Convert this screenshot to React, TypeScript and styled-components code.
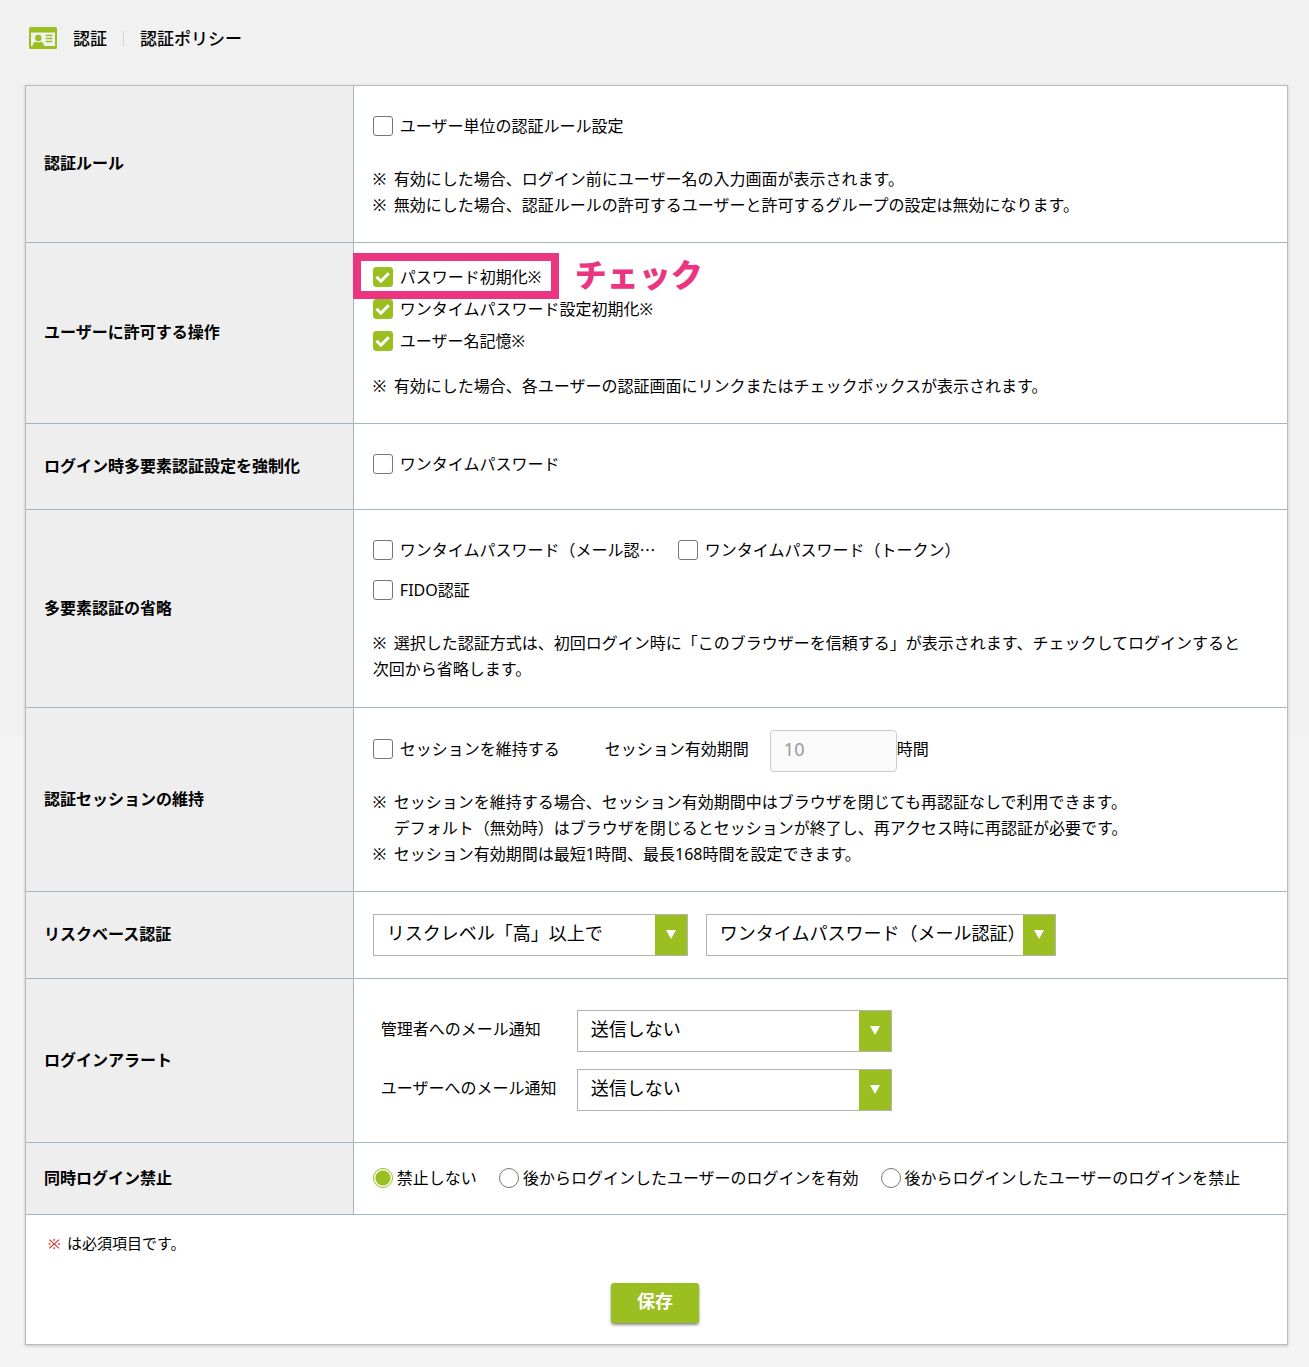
import React, { useId, useState } from "react";
import styled, { createGlobalStyle } from "styled-components";

const GREEN = "#9bbe20";
const PINK = "#eb3581";
const LINE = "#a5b5c0";

const GlobalStyle = createGlobalStyle`
  *, *::before, *::after { box-sizing: border-box; }
  body {
    margin: 0;
    background: linear-gradient(#f1f1f1 736px, #f4f4f4 736px) #f4f4f4;
    color: #000;
    font-family: "Noto Sans", "Noto Sans CJK JP", sans-serif;
    font-size: 16px;
    line-height: 26px;
  }
  button, input, select { font: inherit; }
`;

const Page = styled.main`
  padding: 0 21px 22px 25px;
`;

const Header = styled.header`
  display: flex;
  align-items: center;
  padding: 26px 4px 34px;
  font-size: 17px;
  line-height: 25px;
  font-weight: 500;
`;

const CardIcon = styled.svg`
  display: block;
  width: 28px;
  height: 22px;
  margin-bottom: 2px;
`;

const Title = styled.h1`
  margin: 0 0 0 16px;
  font-size: inherit;
  font-weight: inherit;
`;

const SubTitle = styled.h2`
  margin: 0;
  font-size: inherit;
  font-weight: inherit;
`;

const Divider = styled.span`
  width: 1px;
  height: 15px;
  margin: 0 16px;
  background: #d4d4d4;
`;

const Panel = styled.form`
  background: #fff;
  border: 1px solid #bbb;
  box-shadow: 0 1px 3px rgba(0, 0, 0, 0.2);
`;

const Row = styled.section`
  display: grid;
  grid-template-columns: 26% minmax(0, 1fr);
  border-bottom: 1px solid ${LINE};
`;

const RowLabel = styled.h3`
  display: flex;
  align-items: center;
  margin: 0;
  padding: 0 18px 2px;
  background: #eee;
  border-right: 1px solid ${LINE};
  font-size: 16px;
  font-weight: 700;
`;

const Cell = styled.div<{ $top: number; $bottom: number; $gap?: number }>`
  display: flex;
  flex-direction: column;
  gap: ${(p) => p.$gap ?? 24}px;
  padding: ${(p) => p.$top}px 18px ${(p) => p.$bottom}px 19px;
`;

const Stack = styled.div`
  display: flex;
  flex-direction: column;
`;

const Wrapping = styled.div<{ $gap: number }>`
  display: flex;
  flex-wrap: wrap;
  align-items: center;
  gap: 8px ${(p) => p.$gap}px;
`;

const Option = styled.label<{ $width?: number; $gap?: number }>`
  display: inline-flex;
  align-items: center;
  gap: ${(p) => p.$gap ?? 7}px;
  width: ${(p) => (p.$width ? `${p.$width}px` : "auto")};
  min-height: 32px;
  white-space: nowrap;
`;

const CHECK_MARK =
  "url(\"data:image/svg+xml,%3Csvg xmlns='http://www.w3.org/2000/svg' viewBox='0 0 20 20'%3E%3Cpath d='M3.500 9.800 7.900 14.200 15.800 6.200' fill='none' stroke='white' stroke-width='3'/%3E%3C/svg%3E\")";

const Tick = styled.input`
  flex: none;
  width: 20px;
  height: 20px;
  margin: 0;
  appearance: none;
  border: 1px solid #767676;
  border-radius: 3px;
  background: #fff;

  &:checked {
    border-color: ${GREEN};
    background: ${GREEN} ${CHECK_MARK} center / 20px 20px no-repeat;
  }
`;

const Radio = styled(Tick)`
  border-radius: 50%;

  &:checked {
    background: radial-gradient(circle, ${GREEN} 7px, #fff 8px);
  }
`;

const Ellipsis = styled.span`
  font-family: "Noto Sans CJK JP", sans-serif;
  line-height: 1;
`;

const Note = styled.p`
  margin: 0;
`;

const Mark = styled.span`
  display: inline-block;
  width: 21px;
  white-space: pre;
`;

const Indented = styled.span`
  display: block;
  padding-left: 21px;
`;

const Highlight = styled.div`
  position: relative;
  display: flex;
`;

const Marker = styled.div`
  position: absolute;
  top: -8px;
  left: -20px;
  width: 206px;
  height: 46px;
  border: 8px solid ${PINK};
  pointer-events: none;
`;

const MarkerText = styled.strong`
  position: absolute;
  top: 0;
  left: 202px;
  color: ${PINK};
  font-family: "Noto Sans CJK JP", sans-serif;
  font-size: 32px;
  line-height: 24px;
  font-weight: 900;
  white-space: nowrap;
`;

const FieldLabel = styled.label<{ $width: number }>`
  flex: none;
  width: ${(p) => p.$width}px;
  padding-bottom: 4px;
`;

const Unit = styled.span`
  padding-bottom: 4px;
`;

const SessionRow = styled.div`
  display: flex;
  align-items: center;

  ${Option} {
    padding-bottom: 4px;
  }
`;

const HoursInput = styled.input`
  width: 127px;
  height: 42px;
  padding: 0 13px 4px;
  border: 1px solid #ccc;
  border-radius: 4px;
  background: #fafafa;
  color: #999;
  font-size: 18px;
`;

const AlertGrid = styled.div`
  display: flex;
  flex-direction: column;
  gap: 17px;
  padding-left: 8px;
`;

const AlertLine = styled.div`
  display: flex;
  align-items: center;
`;

const SelectBox = styled.div<{ $width: number }>`
  position: relative;
  width: ${(p) => p.$width}px;
  height: 42px;
  border: 1px solid #b3b3b3;
`;

const SelectControl = styled.select`
  display: block;
  width: 100%;
  height: 100%;
  padding: 0 32px 4px 13px;
  border: 0;
  border-radius: 0;
  appearance: none;
  background: #fff;
  color: #000;
  font-size: 18px;
`;

const SelectArrow = styled.span`
  position: absolute;
  top: 0;
  right: 0;
  bottom: 0;
  display: flex;
  align-items: center;
  justify-content: center;
  width: 32px;
  padding-bottom: 2px;
  background: ${GREEN};
  pointer-events: none;
`;

const Footer = styled.footer`
  display: flex;
  flex-direction: column;
  padding: 15px 25px 21px 22px;
  font-size: 15px;
`;

const Required = styled.span`
  display: inline-block;
  width: 19px;
  color: #e02020;
  white-space: pre;
`;

const SaveButton = styled.button`
  align-self: center;
  width: 88px;
  height: 40px;
  margin-top: 27px;
  padding: 0 0 4px;
  border: 0;
  border-radius: 3px;
  background: ${GREEN};
  box-shadow: 0 2px 3px rgba(0, 0, 0, 0.45);
  color: #fff;
  font-size: 18px;
  font-weight: 700;
`;

function Check({ label, checked = false, width }: { label: React.ReactNode; checked?: boolean; width?: number }) {
  return (
    <Option $width={width}>
      <Tick type="checkbox" defaultChecked={checked} />
      <span>{label}</span>
    </Option>
  );
}

function Dropdown({ id, label, options, width }: { id?: string; label?: string; options: string[]; width: number }) {
  return (
    <SelectBox $width={width}>
      <SelectControl id={id} aria-label={label}>
        {options.map((o) => (
          <option key={o}>{o}</option>
        ))}
      </SelectControl>
      <SelectArrow aria-hidden="true">
        <svg width="10" height="11" viewBox="0 0 10 11">
          <path d="M0 1h10L5 10z" fill="#fff" />
        </svg>
      </SelectArrow>
    </SelectBox>
  );
}

function Setting({ title, children }: { title: string; children: React.ReactNode }) {
  const id = useId();
  return (
    <Row aria-labelledby={id}>
      <RowLabel id={id}>{title}</RowLabel>
      {children}
    </Row>
  );
}

const LOGIN_MODES = ["禁止しない", "後からログインしたユーザーのログインを有効", "後からログインしたユーザーのログインを禁止"];

export default function App() {
  const [mode, setMode] = useState(0);
  return (
    <Page lang="ja">
      <GlobalStyle />
      <Header>
        <CardIcon viewBox="0 0 28 22" aria-hidden="true">
          <path
            fill={GREEN}
            fillRule="evenodd"
            d="M1.500 0h25a1.500 1.500 0 0 1 1.500 1.500v19a1.500 1.500 0 0 1-1.500 1.500h-25a1.500 1.500 0 0 1-1.500-1.500v-19a1.500 1.500 0 0 1 1.500-1.500zM2 5.500v13.500h24v-13.500z"
          />
          <circle cx="9.300" cy="11" r="3.200" fill={GREEN} />
          <path d="M3.700 19c0-2.500 1.300-4 3.300-4.200 1.400 1 3.200 1 4.600 0 2 .2 3.400 1.700 3.400 4.200z" fill={GREEN} />
          <path d="M16.700 8.500h6.600M16.700 11.500h6.600M16.700 14.500h6.600" stroke={GREEN} strokeWidth="1.600" />
        </CardIcon>
        <Title>認証</Title>
        <Divider />
        <SubTitle>認証ポリシー</SubTitle>
      </Header>

      <Panel onSubmit={(e) => e.preventDefault()}>
        <Setting title="認証ルール">
          <Cell $top={24} $bottom={24}>
            <Check label="ユーザー単位の認証ルール設定" />
            <Note>
              <Mark>※ </Mark>有効にした場合、ログイン前にユーザー名の入力画面が表示されます。
              <br />
              <Mark>※ </Mark>無効にした場合、認証ルールの許可するユーザーと許可するグループの設定は無効になります。
            </Note>
          </Cell>
        </Setting>

        <Setting title="ユーザーに許可する操作">
          <Cell $top={18} $bottom={24} $gap={16}>
            <Stack>
              <Highlight>
                <Check label="パスワード初期化※" checked />
                <Marker />
                <MarkerText>チェック</MarkerText>
              </Highlight>
              <Check label="ワンタイムパスワード設定初期化※" checked />
              <Check label="ユーザー名記憶※" checked />
            </Stack>
            <Note>
              <Mark>※ </Mark>有効にした場合、各ユーザーの認証画面にリンクまたはチェックボックスが表示されます。
            </Note>
          </Cell>
        </Setting>

        <Setting title="ログイン時多要素認証設定を強制化">
          <Cell $top={24} $bottom={29}>
            <Check label="ワンタイムパスワード" />
          </Cell>
        </Setting>

        <Setting title="多要素認証の省略">
          <Cell $top={24} $bottom={25}>
            <Wrapping $gap={18}>
              <Check
                width={287}
                label={
                  <>
                    ワンタイムパスワード（メール認<Ellipsis>…</Ellipsis>
                  </>
                }
              />
              <Check label="ワンタイムパスワード（トークン）" width={287} />
              <Check label="FIDO認証" width={287} />
            </Wrapping>
            <Note>
              <Mark>※ </Mark>選択した認証方式は、初回ログイン時に「このブラウザーを信頼する」が表示されます、チェックしてログインすると
              <br />
              次回から省略します。
            </Note>
          </Cell>
        </Setting>

        <Setting title="認証セッションの維持">
          <Cell $top={22} $bottom={24} $gap={17}>
            <SessionRow>
              <Check label="セッションを維持する" width={232} />
              <FieldLabel htmlFor="session-hours" $width={165}>
                セッション有効期間
              </FieldLabel>
              <HoursInput id="session-hours" type="text" defaultValue="10" disabled />
              <Unit>時間</Unit>
            </SessionRow>
            <Note>
              <Mark>※ </Mark>セッションを維持する場合、セッション有効期間中はブラウザを閉じても再認証なしで利用できます。
              <Indented>デフォルト（無効時）はブラウザを閉じるとセッションが終了し、再アクセス時に再認証が必要です。</Indented>
              <Mark>※ </Mark>セッション有効期間は最短1時間、最長168時間を設定できます。
            </Note>
          </Cell>
        </Setting>

        <Setting title="リスクベース認証">
          <Cell $top={22} $bottom={22}>
            <Wrapping $gap={18}>
              <Dropdown label="リスクレベル" options={["リスクレベル「高」以上で"]} width={315} />
              <Dropdown label="認証方式" options={["ワンタイムパスワード（メール認証）"]} width={350} />
            </Wrapping>
          </Cell>
        </Setting>

        <Setting title="ログインアラート">
          <Cell $top={31} $bottom={31}>
            <AlertGrid>
              <AlertLine>
                <FieldLabel htmlFor="admin-mail" $width={196}>
                  管理者へのメール通知
                </FieldLabel>
                <Dropdown id="admin-mail" options={["送信しない"]} width={315} />
              </AlertLine>
              <AlertLine>
                <FieldLabel htmlFor="user-mail" $width={196}>
                  ユーザーへのメール通知
                </FieldLabel>
                <Dropdown id="user-mail" options={["送信しない"]} width={315} />
              </AlertLine>
            </AlertGrid>
          </Cell>
        </Setting>

        <Setting title="同時ログイン禁止">
          <Cell $top={19} $bottom={20}>
            <Wrapping $gap={22}>
              {LOGIN_MODES.map((text, i) => (
                <Option key={text} $gap={4}>
                  <Radio type="radio" name="login-mode" checked={mode === i} onChange={() => setMode(i)} />
                  <span>{text}</span>
                </Option>
              ))}
            </Wrapping>
          </Cell>
        </Setting>

        <Footer>
          <Note>
            <Required>※ </Required>は必須項目です。
          </Note>
          <SaveButton type="submit">保存</SaveButton>
        </Footer>
      </Panel>
    </Page>
  );
}
